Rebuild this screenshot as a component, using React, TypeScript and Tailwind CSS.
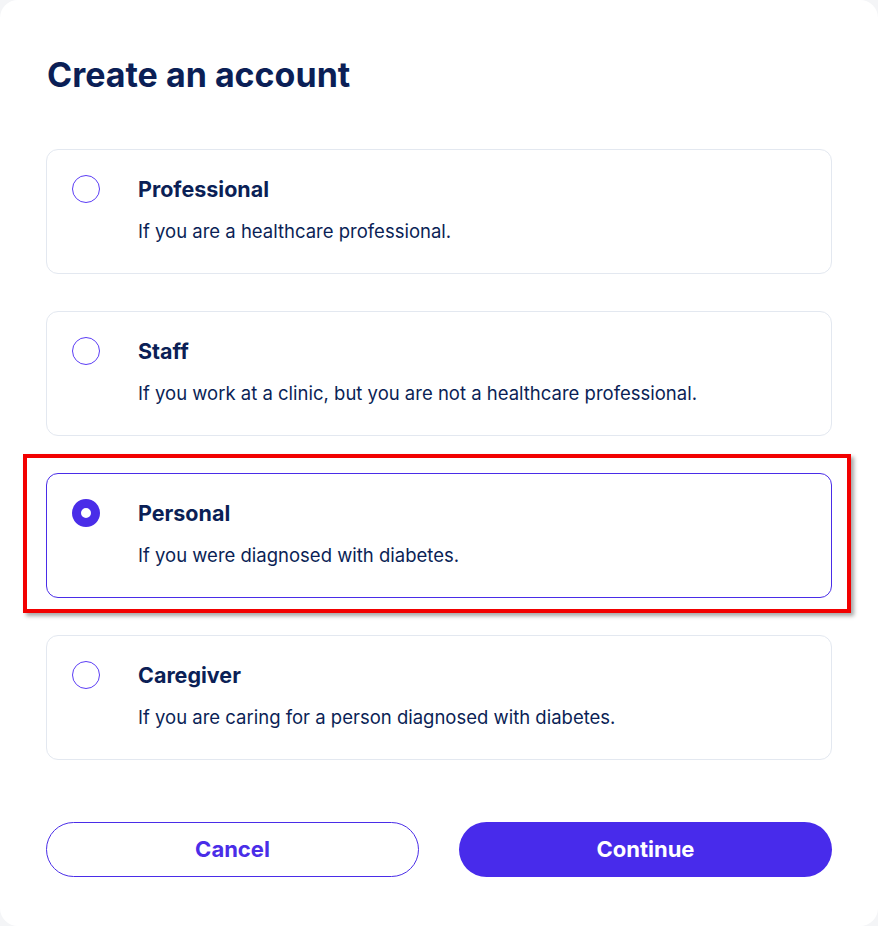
import React from "react";

const options = [
  { title: "Professional", desc: "If you are a healthcare professional.", selected: false },
  { title: "Staff", desc: "If you work at a clinic, but you are not a healthcare professional.", selected: false },
  { title: "Personal", desc: "If you were diagnosed with diabetes.", selected: true },
  { title: "Caregiver", desc: "If you are caring for a person diagnosed with diabetes.", selected: false },
];

export default function App() {
  return (
    <div
      className="relative w-[878px] h-[926px] bg-[#f4f5f7]"
      style={{ fontFamily: "Inter, 'Noto Sans', sans-serif" }}
    >
      <div className="w-full h-full bg-white rounded-[18px] px-[46px] pt-[55px]">
        <h1 className="text-[34px] leading-[40px] font-bold text-[#0b1f56] pl-[1px]">Create an account</h1>
        <div className="mt-[54px] flex flex-col gap-[37.6px]">
          {options.map((o) => (
            <div
              key={o.title}
              className={`h-[124.5px] rounded-[12px] border flex pl-[25px] pt-[25px] ${
                o.selected ? "border-[#4a2de8]" : "border-[#e3e8f0]"
              }`}
            >
              {o.selected ? (
                <div className="w-[28px] h-[28px] rounded-full border-[9px] border-[#4a2de8] bg-white shrink-0" />
              ) : (
                <div className="w-[28px] h-[28px] rounded-full border border-[#5b3df5] bg-white shrink-0" />
              )}
              <div className="ml-[38px] flex flex-col pt-[1px]">
                <div className="text-[21.5px] leading-[27px] font-bold text-[#0b1f56]">{o.title}</div>
                <div className="mt-[15px] text-[18.5px] leading-[26px] text-[#0b1f56]">{o.desc}</div>
              </div>
            </div>
          ))}
        </div>
        <div className="mt-[62px] flex justify-between">
          <button className="w-[373px] h-[55px] rounded-full border border-[#4a2de8] text-[#4a2de8] text-[22px] font-bold bg-white">
            Cancel
          </button>
          <button className="w-[373px] h-[55px] rounded-full bg-[#482beb] text-white text-[22px] font-bold">
            Continue
          </button>
        </div>
      </div>
      <div className="absolute left-[23px] top-[454px] w-[828px] h-[159px] border-[4px] border-[#f20000] shadow-[3px_3px_4px_rgba(0,0,0,0.35)] pointer-events-none" />
    </div>
  );
}
